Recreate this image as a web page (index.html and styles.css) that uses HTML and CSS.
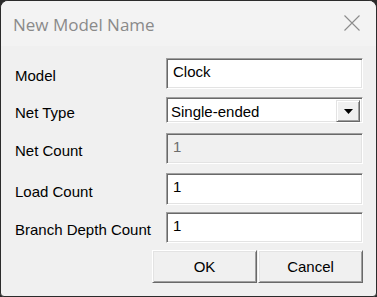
FILE: index.html
```html
<!DOCTYPE html>
<html>
<head>
<meta charset="utf-8">
<link rel="stylesheet" href="styles.css">
</head>
<body>
<div class="window">
  <div class="titlebar">
    <span class="title">New Model Name</span>
    <svg class="close" width="16" height="16" viewBox="0 0 16 16"><path d="M0.5 0.5 L15.5 15.5 M15.5 0.5 L0.5 15.5" stroke="#8c8c8c" stroke-width="1.1" fill="none"/></svg>
  </div>
  <div class="form">
    <div class="row r1">
      <div class="label">Model</div>
      <div class="field">Clock</div>
    </div>
    <div class="row r2">
      <div class="label">Net Type</div>
      <div class="field select">
        <span class="value">Single-ended</span>
        <span class="drop"><svg width="9" height="5" viewBox="0 0 9 5"><path d="M0 0 H9 L4.5 5 Z" fill="#000"/></svg></span>
      </div>
    </div>
    <div class="row r3">
      <div class="label">Net Count</div>
      <div class="field disabled">1</div>
    </div>
    <div class="row r4">
      <div class="label">Load Count</div>
      <div class="field tall">1</div>
    </div>
    <div class="row r5">
      <div class="label">Branch Depth Count</div>
      <div class="field">1</div>
    </div>
    <div class="buttons">
      <div class="btn">OK</div>
      <div class="btn">Cancel</div>
    </div>
  </div>
</div>
</body>
</html>
```
FILE: styles.css
```css
html, body {
  margin: 0;
  padding: 0;
  background: #2b2b2b;
}
.window {
  width: 377px;
  height: 297px;
  box-sizing: border-box;
  border: 1px solid #2b2b2b;
  border-radius: 8px 8px 4px 4px;
  overflow: hidden;
  background: #f0f0f0;
  font-family: "Liberation Sans", Arial, sans-serif;
  font-size: 15px;
  color: #000;
}
.titlebar {
  height: 45px;
  background: #f3f3f3;
  display: flex;
  align-items: center;
  padding: 0 16px 0 12px;
}
.title {
  font-family: "Open Sans", "Noto Sans", sans-serif;
  font-size: 17px;
  color: #8a8a8a;
  flex: 1;
  padding-top: 1px;
}
.close {
  display: block;
  margin-bottom: 1px;
}
.form {
  padding: 12px 13px 0 14px;
  display: flex;
  flex-direction: column;
}
.row {
  display: flex;
  align-items: center;
}
.r2 { margin-top: 8px; }
.r3 { margin-top: 10px; }
.r4 { margin-top: 9px; }
.r5 { margin-top: 7px; }
.label {
  width: 151px;
  padding-top: 4px;
  line-height: 17px;
}
.field {
  width: 197px;
  height: 31px;
  box-sizing: border-box;
  background: #fff;
  border: 1px solid;
  border-color: #a0a0a0 #fff #fff #a0a0a0;
  box-shadow: inset 1px 1px #696969, inset -1px -1px #e3e3e3;
  padding: 4px 5px 0 6px;
  line-height: 17px;
}
.field.tall { height: 32px; }
.field.disabled {
  background: #f0f0f0;
  color: #6d6d6d;
}
.select {
  height: 26px;
  display: flex;
  align-items: flex-start;
  padding: 5px 2px 0 4px;
  position: relative;
}
.select .value { flex: 1; }
.drop {
  position: absolute;
  right: 2px;
  top: 2px;
  width: 24px;
  height: 22px;
  box-sizing: border-box;
  background: #f0f0f0;
  border: 1px solid;
  border-color: #e3e3e3 #696969 #696969 #e3e3e3;
  box-shadow: inset 1px 1px #fff, inset -1px -1px #a0a0a0;
  display: flex;
  align-items: center;
  justify-content: center;
}
.drop svg { display: block; margin-top: 1px; }
.buttons {
  margin-top: 7px;
  display: flex;
  justify-content: flex-end;
  gap: 1px;
}
.btn {
  width: 105px;
  height: 33px;
  box-sizing: border-box;
  background: #f0f0f0;
  border: 1px solid;
  border-color: #fff #696969 #696969 #fff;
  box-shadow: inset 1px 1px #e3e3e3, inset -1px -1px #a0a0a0;
  display: flex;
  align-items: center;
  justify-content: center;
  line-height: 17px;
}
```
